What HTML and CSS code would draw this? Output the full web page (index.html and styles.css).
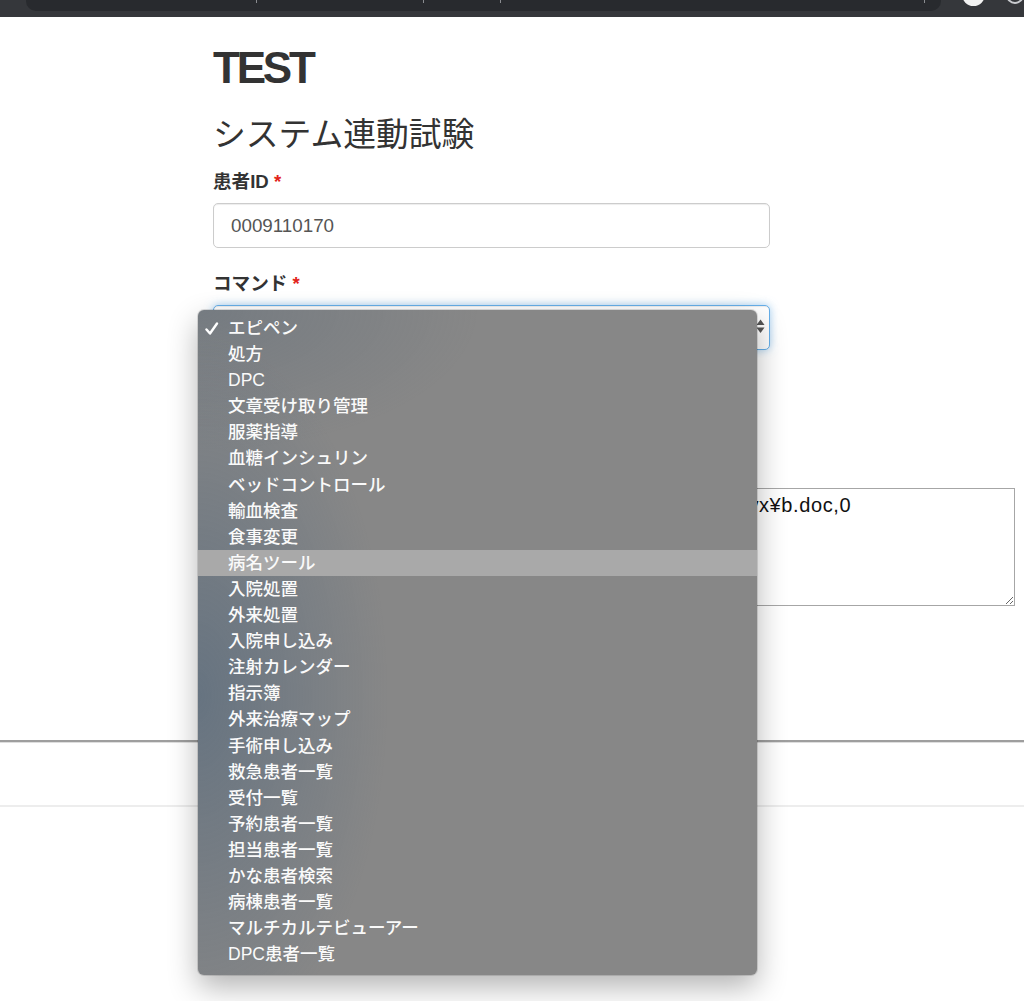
FILE: index.html
```html
<!DOCTYPE html>
<html lang="ja">
<head>
<meta charset="utf-8">
<title>TEST</title>
<link rel="stylesheet" href="styles.css">
</head>
<body>
<div class="chrome">
  <div class="omnibox">
    <i class="tick tick-a"></i>
    <i class="tick tick-b"></i>
    <i class="tick tick-c"></i>
    <i class="tick tick-d"></i>
  </div>
  <div class="avatar"></div>
  <div class="ext"></div>
</div>

<main class="page">
  <h1 class="title">TEST</h1>
  <h2 class="subtitle">システム連動試験</h2>

  <div class="group group-first">
    <label class="label" for="pid">患者ID <span class="req">*</span></label>
    <input class="control" id="pid" type="text" value="0009110170">
  </div>

  <div class="group">
    <label class="label">コマンド <span class="req">*</span></label>
    <div class="control select">
      <span class="select-value"></span>
      <svg class="arrows" width="9" height="15" viewBox="0 0 9 15">
        <path d="M4.5 0.5 L8.5 6 L0.5 6 Z" fill="#555"/>
        <path d="M0.5 8.5 L8.5 8.5 L4.5 14 Z" fill="#555"/>
      </svg>
    </div>
  </div>

  <div class="group-param">
    <textarea class="param" id="param">1,C:¥Users¥Public¥Documents¥Templates¥Medical¥tx¥vx¥b.doc,0</textarea>
  </div>
</main>

<div class="rule-dark"></div>
<div class="rule-light"></div>

<div class="menu">
  <div class="item checked"><svg class="check" width="14" height="14" viewBox="0 0 14 14"><path d="M1.5 7.5 L5 11.5 L12 1.5" fill="none" stroke="#fff" stroke-width="2.4" stroke-linecap="round" stroke-linejoin="round"/></svg>エピペン</div>
  <div class="item">処方</div>
  <div class="item">DPC</div>
  <div class="item">文章受け取り管理</div>
  <div class="item">服薬指導</div>
  <div class="item">血糖インシュリン</div>
  <div class="item">ベッドコントロール</div>
  <div class="item">輸血検査</div>
  <div class="item">食事変更</div>
  <div class="item hover">病名ツール</div>
  <div class="item">入院処置</div>
  <div class="item">外来処置</div>
  <div class="item">入院申し込み</div>
  <div class="item">注射カレンダー</div>
  <div class="item">指示簿</div>
  <div class="item">外来治療マップ</div>
  <div class="item">手術申し込み</div>
  <div class="item">救急患者一覧</div>
  <div class="item">受付一覧</div>
  <div class="item">予約患者一覧</div>
  <div class="item">担当患者一覧</div>
  <div class="item">かな患者検索</div>
  <div class="item">病棟患者一覧</div>
  <div class="item">マルチカルテビューアー</div>
  <div class="item">DPC患者一覧</div>
</div>
</body>
</html>
```

FILE: styles.css
```css
html, body {
  margin: 0;
  padding: 0;
  background: #fff;
}

body {
  position: relative;
  min-height: 1001px;
  font-family: "Liberation Sans", "Noto Sans CJK JP", sans-serif;
  color: #333;
}

/* browser chrome strip */
.chrome {
  height: 17px;
  background: #35373b;
  display: flex;
  align-items: flex-start;
  overflow: hidden;
}

.omnibox {
  position: relative;
  margin-left: 26px;
  width: 920px;
  height: 11px;
  background: #282a2e;
  border-radius: 0 0 10px 10px;
}

.tick {
  position: absolute;
  top: 0;
  width: 1px;
  height: 3px;
  background: #8a8c90;
}
.tick-a { left: 230px; }
.tick-b { left: 397px; }
.tick-c { left: 474px; }
.tick-d { left: 898px; }

.avatar {
  margin-left: 21px;
  margin-top: -17px;
  width: 23px;
  height: 23px;
  border-radius: 50%;
  background: #f2f2f2;
}

.ext {
  margin-left: 21px;
  margin-top: -14px;
  width: 18px;
  height: 18px;
  border-radius: 50%;
  border: 2px solid #c9cbcf;
  box-sizing: border-box;
}

/* page content */
.page {
  padding-left: 213px;
  width: 557px;
}

.title {
  margin: 27px 0 0;
  font-size: 44px;
  line-height: 48px;
  font-weight: bold;
  letter-spacing: -3.2px;
}

.subtitle {
  margin: 23px 0 0;
  font-size: 32.8px;
  line-height: 40px;
  font-weight: normal;
}

.group {
  margin-top: 23px;
}

.group-first {
  margin-top: 14px;
}

.group-param {
  margin-top: 138px;
}

.label {
  display: block;
  font-size: 18.6px;
  line-height: 26px;
  font-weight: bold;
  margin-bottom: 8px;
}

.req {
  color: #e2231a;
}

.control {
  display: block;
  box-sizing: border-box;
  width: 557px;
  height: 45px;
  padding: 0 17px;
  border: 1px solid #cccccc;
  border-radius: 5px;
  font-family: "Liberation Sans", "Noto Sans CJK JP", sans-serif;
  font-size: 18.8px;
  color: #555;
  background: #fff;
  box-shadow: inset 0 1px 1px rgba(0, 0, 0, 0.075);
}

.select {
  display: flex;
  align-items: center;
  padding-right: 4px;
  border-color: #66afe9;
  box-shadow: inset 0 1px 1px rgba(0, 0, 0, 0.075), 0 0 8px rgba(102, 175, 233, 0.6);
}

.select-value {
  flex: 1;
}

.arrows {
  margin-top: -3px;
}

.param {
  display: block;
  box-sizing: border-box;
  width: 802px;
  height: 118px;
  margin: 0;
  padding: 3px 2px 3px 7px;
  border: 1px solid #a6a6a6;
  border-radius: 0;
  font-family: "Liberation Sans", sans-serif;
  font-size: 20px;
  line-height: 26px;
  letter-spacing: 0.6px;
  color: #111;
  white-space: pre;
  overflow: hidden;
  resize: both;
}

.rule-dark {
  margin-top: 134px;
  height: 2px;
  background: #9e9e9e;
  border-bottom: 1px solid #dedede;
}

.rule-light {
  margin-top: 62px;
  height: 2px;
  background: #ededed;
}

/* native popup menu of the select */
.menu {
  position: absolute;
  left: 198px;
  top: 310px;
  width: 559px;
  box-sizing: border-box;
  padding: 5px 0 8px;
  border-radius: 6px;
  background:
    radial-gradient(ellipse 190px 360px at 0% 58%, rgba(70, 96, 122, 0.5), rgba(70, 96, 122, 0) 100%),
    radial-gradient(ellipse 280px 140px at 0% 0%, rgba(90, 105, 120, 0.4), rgba(90, 105, 120, 0) 100%),
    #878787;
  box-shadow: 0 0 0 1px rgba(0, 0, 0, 0.12), 0 12px 30px rgba(0, 0, 0, 0.3);
  font-family: "Liberation Sans", "Noto Sans CJK JP", sans-serif;
  font-size: 17.5px;
  font-weight: 500;
  color: #fafafa;
}

.item {
  position: relative;
  height: 26.1px;
  line-height: 26.1px;
  padding-left: 30px;
  white-space: nowrap;
}

.item.hover {
  background: #a9a9a9;
}

.check {
  position: absolute;
  left: 7px;
  top: 7px;
}
```
